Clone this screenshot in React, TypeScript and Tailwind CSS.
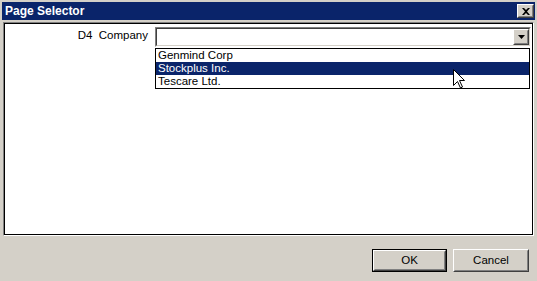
import React from 'react';

const companies = ['Genmind Corp', 'Stockplus Inc.', 'Tescare Ltd.'];
const selected = 1;

const font = { fontFamily: '"Liberation Sans", Arial, sans-serif' };

const Raised: React.FC<{ className?: string; children?: React.ReactNode }> = ({ className = '', children }) => (
  <div className={`border border-t-white border-l-white border-r-[#404040] border-b-[#404040] ${className}`}>
    <div className="w-full h-full flex items-center justify-center border border-t-[#d4d0c8] border-l-[#d4d0c8] border-r-[#808080] border-b-[#808080] bg-[#d4d0c8]">
      {children}
    </div>
  </div>
);

export default function App() {
  return (
    <div style={font} className="w-[537px] h-[281px] bg-[#d4d0c8] flex flex-col pt-[2px] pl-[2px] pr-[2px] text-[11px] text-black overflow-hidden">
      {/* title bar */}
      <div className="h-[18px] bg-[#0a246a] flex items-center justify-between pl-[3px] pr-[1px]">
        <span className="text-white font-bold text-[12px] leading-none">Page Selector</span>
        <Raised className="w-[17px] h-[14px]">
          <svg width="8" height="7" viewBox="0 0 8 7">
            <path d="M0 0h2l2 2 2-2h2L5 3.5 8 7H6L4 5 2 7H0l3-3.5z" fill="#000" />
          </svg>
        </Raised>
      </div>

      {/* content panel */}
      <div className="mt-[2px] ml-[1px] w-[531px] h-[214px] border border-t-[#808080] border-l-[#808080] border-r-white border-b-white">
        <div className="w-full h-full bg-white border border-black flex items-start pt-[3px]">
          <div className="w-[143px] text-right pt-[1px] whitespace-pre leading-[14px] text-[11.5px]">D4  Company</div>
          <div className="ml-[7px] relative">
            {/* combo box */}
            <div className="w-[376px] h-[20px] border border-t-[#808080] border-l-[#808080] border-r-white border-b-white">
              <div className="w-full h-full bg-white border border-t-[#404040] border-l-[#404040] border-r-[#d4d0c8] border-b-[#d4d0c8] flex justify-end">
                <Raised className="w-[16px] h-[16px]">
                  <svg width="7" height="4" viewBox="0 0 7 4">
                    <path d="M0 0h7L3.5 4z" fill="#000" />
                  </svg>
                </Raised>
              </div>
            </div>
            {/* dropdown list */}
            <div className="absolute left-0 top-[21px] w-[375px] border border-black bg-white text-[11.5px]">
              {companies.map((c, i) => (
                <div
                  key={c}
                  className={`h-[13px] leading-[13px] pl-[2px] ${i === selected ? 'bg-[#0a246a] text-white' : ''}`}
                >
                  {c}
                </div>
              ))}
            </div>
            {/* mouse pointer */}
            <svg className="absolute left-[298px] top-[42px]" width="12" height="20" viewBox="0 0 12 20">
              <path d="M0.5 0.5V16.5L4.5 12.5L7.5 19L9.5 18L6.5 11.5H11.5Z" fill="#fff" stroke="#000" strokeWidth="1" />
            </svg>
          </div>
        </div>
      </div>

      {/* button row */}
      <div className="flex justify-end gap-[6px] pr-[6px] pt-[13px] text-[11.5px]">
        <div className="w-[75px] h-[23px] border border-black">
          <Raised className="w-full h-full">OK</Raised>
        </div>
        <Raised className="w-[76px] h-[23px]">Cancel</Raised>
      </div>
    </div>
  );
}
